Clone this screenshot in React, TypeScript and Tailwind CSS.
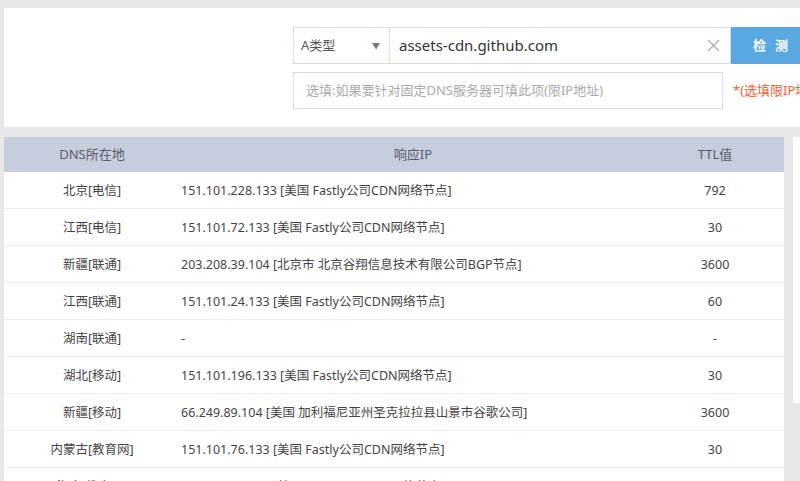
import React from "react";

const rows = [
  { loc: "北京[电信]", ip: "151.101.228.133 [美国 Fastly公司CDN网络节点]", ttl: "792" },
  { loc: "江西[电信]", ip: "151.101.72.133 [美国 Fastly公司CDN网络节点]", ttl: "30" },
  { loc: "新疆[联通]", ip: "203.208.39.104 [北京市 北京谷翔信息技术有限公司BGP节点]", ttl: "3600" },
  { loc: "江西[联通]", ip: "151.101.24.133 [美国 Fastly公司CDN网络节点]", ttl: "60" },
  { loc: "湖南[联通]", ip: "-", ttl: "-" },
  { loc: "湖北[移动]", ip: "151.101.196.133 [美国 Fastly公司CDN网络节点]", ttl: "30" },
  { loc: "新疆[移动]", ip: "66.249.89.104 [美国 加利福尼亚州圣克拉拉县山景市谷歌公司]", ttl: "3600" },
  { loc: "内蒙古[教育网]", ip: "151.101.76.133 [美国 Fastly公司CDN网络节点]", ttl: "30" },
  { loc: "海南[教育网]", ip: "151.101.76.133 [美国 Fastly公司CDN网络节点]", ttl: "30" },
];

const font = { fontFamily: '"Noto Sans", "Noto Sans CJK SC", sans-serif' };

export default function App() {
  return (
    <div className="w-[800px] h-[481px] overflow-hidden bg-[#e8e8e8] pt-2" style={font}>
      {/* search panel */}
      <div className="ml-1 h-[119px] overflow-hidden bg-white pl-[289px] pt-[19px]">
        <div className="flex h-[37px] w-[600px]">
          <div className="flex w-[97px] shrink-0 items-center justify-between border border-[#d6dce8] pl-[7px] pr-[9px] text-[13px] text-[#555]">
            <span>A类型</span>
            <span className="text-[8px] text-[#777]">▼</span>
          </div>
          <div className="flex w-[341px] shrink-0 items-center justify-between border border-l-0 border-[#d6dce8] pl-[9px] pr-[10px]">
            <span className="text-[15px] text-[#333]">assets-cdn.github.com</span>
            <svg width="13" height="13" viewBox="0 0 13 13" stroke="#aaa" strokeWidth="1.1">
              <path d="M1 1 L12 12 M12 1 L1 12" />
            </svg>
          </div>
          <div className="flex w-[80px] shrink-0 items-center bg-[#5aa8e2] pl-[22px] text-[13px] font-bold tracking-[9px] text-white">
            检测
          </div>
        </div>
        <div className="mt-[8px] flex h-[37px] w-[600px] items-center">
          <div className="flex h-full w-[430px] shrink-0 items-center border border-[#d6dce8] pl-[12px] text-[13px] text-[#aaa]">
            选填:如果要针对固定DNS服务器可填此项(限IP地址)
          </div>
          <span className="ml-[10px] shrink-0 whitespace-nowrap text-[13px] text-[#ff5a2c]">*(选填限IP地址)</span>
        </div>
      </div>

      {/* results */}
      <div className="mt-[10px] flex">
        <div className="ml-1 w-[780px] bg-white">
          <div className="flex h-[35px] items-center bg-[#c6cedd] text-[13px] text-[#555c6a]">
            <div className="w-[176px] text-center">DNS所在地</div>
            <div className="w-[466px] text-center">响应IP</div>
            <div className="flex-1 text-center">TTL值</div>
          </div>
          {rows.map((r, i) => (
            <div key={i} className="flex h-[37px] items-center border-b border-[#ececec] pt-[2px] text-[12.5px] text-[#444]">
              <div className="w-[176px] text-center">{r.loc}</div>
              <div className="w-[466px] pl-[1px]">{r.ip}</div>
              <div className="flex-1 text-center">{r.ttl}</div>
            </div>
          ))}
        </div>
        <div className="ml-[9px] h-[266px] flex-1 bg-white" />
      </div>
    </div>
  );
}
